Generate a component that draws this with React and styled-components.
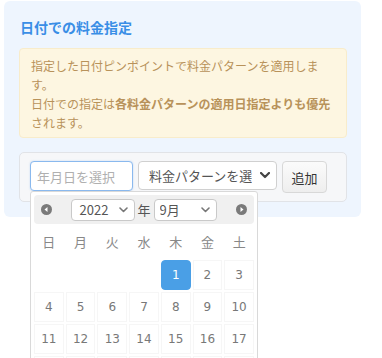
import React from "react";
import styled, { createGlobalStyle } from "styled-components";

const Global = createGlobalStyle`
  html, body { margin: 0; padding: 0; background: #fff; }
  body { font-family: "Noto Sans CJK JP", "Noto Sans", sans-serif; }
  * { box-sizing: border-box; }
`;

const Page = styled.div`
  height: 358px;
  overflow: hidden;
  padding: 1px 0 0 4px;
`;

const Panel = styled.section`
  width: 357px;
  padding: 16px 14px 15px 15px;
  background: #eef5fe;
  border-radius: 6px;
`;

const Title = styled.h3`
  margin: 0 0 11px 1px;
  font-size: 14px;
  line-height: 20px;
  font-weight: 700;
  color: #3a8ee6;
`;

const Alert = styled.div`
  background: #fdf6e1;
  border: 1px solid #f8eccb;
  border-radius: 4px;
  padding: 7px 11px 5px 11px;
  color: #b8925a;
  font-size: 12px;
  line-height: 19px;
  strong { font-weight: 700; }
`;

const FormBox = styled.div`
  margin-top: 14px;
  display: flex;
  align-items: flex-start;
  gap: 5px;
  padding: 8px 10px;
  background: #f6f7f9;
  border: 1px solid #e1e3e7;
  border-radius: 5px;
`;

const InputWrap = styled.div`
  position: relative;
`;

const DateInput = styled.input`
  display: block;
  width: 103px;
  height: 30px;
  border: 1px solid #8ab9ee;
  border-radius: 4px;
  padding: 0 6px;
  font-family: inherit;
  font-size: 13px;
  color: #444;
  outline: none;
  box-shadow: 0 0 2px rgba(100, 160, 230, 0.35);
  &::placeholder { color: #b0b0b0; }
`;

const SelectBox = styled.div`
  display: flex;
  align-items: center;
  width: ${p => p.$w}px;
  height: ${p => p.$h}px;
  padding: 0 ${p => p.$pr}px 0 ${p => p.$pl}px;
  border: 1px solid ${p => p.$border};
  border-radius: 4px;
  background: #fff;
  font-size: 13px;
  color: #555;
  gap: ${p => p.$gap || 4}px;
`;

const SelectText = styled.span`
  flex: 1;
  overflow: hidden;
  white-space: nowrap;
  line-height: 18px;
`;

const Button = styled.button`
  width: 45px;
  height: 32px;
  padding: 0;
  border: 1px solid #d8d8d8;
  border-radius: 4px;
  background: linear-gradient(#fbfbfb, #eeeeee);
  font-family: inherit;
  font-size: 13px;
  color: #333;
`;

const Popup = styled.div`
  position: absolute;
  top: 30px;
  left: 0;
  width: 228px;
  padding: 3px;
  background: #fff;
  border: 1px solid #d9d9d9;
  border-radius: 3px;
  z-index: 10;
`;

const Header = styled.div`
  display: flex;
  align-items: center;
  justify-content: space-between;
  height: 29px;
  padding: 0 7px;
  background: #f0f0f0;
  border-radius: 4px;
`;

const HeaderCenter = styled.div`
  display: flex;
  align-items: center;
`;

const YearLabel = styled.span`
  font-size: 13px;
  color: #555;
  margin: 0 3px 0 2px;
`;

const Weekdays = styled.div`
  display: grid;
  grid-template-columns: repeat(7, 1fr);
  gap: 2px;
  height: 30px;
  margin-top: 2px;
  align-items: center;
  text-align: center;
  font-size: 13px;
  color: #888;
`;

const Days = styled.div`
  display: grid;
  grid-template-columns: repeat(7, 1fr);
  gap: 2px;
  margin-top: 4px;
`;

const Day = styled.div`
  height: 30px;
  display: flex;
  align-items: center;
  justify-content: center;
  font-family: "DejaVu Sans", Verdana, sans-serif;
  font-size: 12px;
  color: ${p => (p.$active ? "#fff" : "#787878")};
  background: ${p => (p.$active ? "#4a9fe6" : "#fff")};
  border: 1px solid ${p => (p.$active ? "#4a9fe6" : p.$empty ? "transparent" : "#f6f6f6")};
  border-radius: ${p => (p.$active ? "4px" : "0")};
`;

const Chevron = ({ bold }) =>
  bold ? (
    <svg width="10" height="7" viewBox="0 0 10 7">
      <polyline points="1,1 5,5 9,1" fill="none" stroke="#444" strokeWidth="2.2" strokeLinecap="round" strokeLinejoin="round" />
    </svg>
  ) : (
    <svg width="9" height="6" viewBox="0 0 9 6">
      <polyline points="1,1 4.5,4.5 8,1" fill="none" stroke="#777" strokeWidth="1.6" strokeLinecap="round" strokeLinejoin="round" />
    </svg>
  );

const NavIcon = ({ dir }) => (
  <svg width="11" height="11" viewBox="0 0 11 11">
    <circle cx="5.5" cy="5.5" r="5.5" fill="#7a7a7a" />
    {dir === "prev" ? (
      <polygon points="3.5,5.5 6.5,3 6.5,8" fill="#fff" />
    ) : (
      <polygon points="7.5,5.5 4.5,3 4.5,8" fill="#fff" />
    )}
  </svg>
);

const weekdays = ["日", "月", "火", "水", "木", "金", "土"];
const days = [null, null, null, null, ...Array.from({ length: 30 }, (_, i) => i + 1)];

export default function App() {
  return (
    <Page>
      <Global />
      <Panel>
        <Title>日付での料金指定</Title>
        <Alert>
          指定した日付ピンポイントで料金パターンを適用します。
          <br />
          日付での指定は<strong>各料金パターンの適用日指定よりも優先</strong>されます。
        </Alert>
        <FormBox>
          <InputWrap>
            <DateInput placeholder="年月日を選択" autoFocus />
            <Popup>
              <Header>
                <NavIcon dir="prev" />
                <HeaderCenter>
                  <SelectBox $w={64} $h={22} $pl={7} $pr={6} $border="#c9c9c9">
                    <SelectText>2022</SelectText>
                    <Chevron />
                  </SelectBox>
                  <YearLabel>年</YearLabel>
                  <SelectBox $w={63} $h={22} $pl={5} $pr={6} $border="#c9c9c9">
                    <SelectText>9月</SelectText>
                    <Chevron />
                  </SelectBox>
                </HeaderCenter>
                <NavIcon dir="next" />
              </Header>
              <Weekdays>
                {weekdays.map(w => (
                  <span key={w}>{w}</span>
                ))}
              </Weekdays>
              <Days>
                {days.map((d, i) => (
                  <Day key={i} $empty={d === null} $active={d === 1}>
                    {d}
                  </Day>
                ))}
              </Days>
            </Popup>
          </InputWrap>
          <SelectBox $w={139} $h={29} $pl={10} $pr={6} $gap={8} $border="#d0d0d0">
            <SelectText>料金パターンを選択</SelectText>
            <Chevron bold />
          </SelectBox>
          <Button>追加</Button>
        </FormBox>
      </Panel>
    </Page>
  );
}
